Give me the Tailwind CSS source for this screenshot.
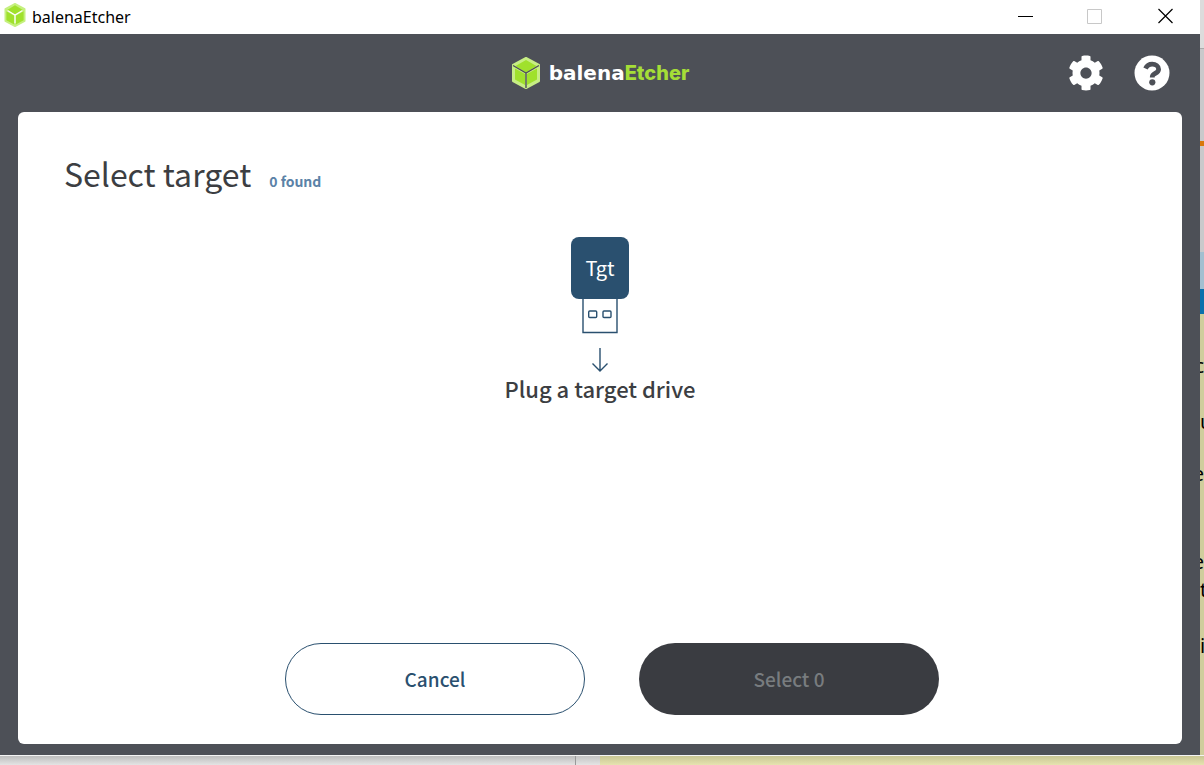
<!DOCTYPE html>
<html lang="en">
<head>
  <meta charset="UTF-8">
  <title>balenaEtcher</title>
  <meta name="viewport" content="width=device-width, initial-scale=1.0">
  <script src="https://cdn.jsdelivr.net/npm/@tailwindcss/browser@4"></script>
</head>
<body class="h-screen flex flex-col overflow-hidden bg-white font-['Noto_Sans_CJK_SC','Noto_Sans',sans-serif]">
  <div class="flex flex-1 min-h-0">

    <!-- App window -->
    <div class="flex flex-col flex-1 min-w-0 bg-[#4d5057]">
      <!-- Title bar -->
      <div class="flex items-center h-[34px] shrink-0 bg-white pl-1">
        <svg class="w-[22px] h-6 -mt-1" viewBox="0 0 28 32">
          <path d="M14 1 27 8v16l-13 7L1 24V8z" fill="#c5f07f" stroke="#c5f07f" stroke-width="2" stroke-linejoin="round"/>
          <path d="M14 3 25 9.500 14 16 3 9.500zM2.500 11 13 17v11.500L2.500 23zM25.500 11 15 17v11.500L25.500 23z" fill="#a0e12c"/>
          <path d="M4 10l10 6 10-6M14 16v11" fill="none" stroke="#fff" stroke-width="1.600"/>
        </svg>
        <span class="ml-[6px] text-[16px] leading-6 text-black font-['Noto_Sans',sans-serif]">balenaEtcher</span>
        <div class="flex ml-auto -mt-[3px]">
          <button class="w-[70px] h-[30px] flex items-center justify-center" aria-label="Minimize">
            <svg class="w-4 h-4" viewBox="0 0 16 16" fill="none" stroke="#000"><path d="M1 8.500h15"/></svg>
          </button>
          <button class="w-[70px] h-[30px] flex items-center justify-center" aria-label="Maximize" disabled>
            <svg class="w-4 h-4" viewBox="0 0 16 16" fill="none" stroke="#c8c8c8"><path d="M.5 1.500h14v14H.5z"/></svg>
          </button>
          <button class="w-[70px] h-[30px] flex items-center justify-center" aria-label="Close">
            <svg class="w-4 h-4" viewBox="0 0 16 16" fill="none" stroke="#000" stroke-width="1.200"><path d="M1.500 1l14 14M15.500 1l-14 14"/></svg>
          </button>
        </div>
      </div>

      <!-- Header -->
      <header class="grid grid-cols-3 items-center h-[78px] shrink-0 px-[30px]">
        <a href="#" class="col-start-2 flex items-center justify-center">
          <svg class="w-[30px] h-8" viewBox="0 0 30 32">
            <path d="M15 1 28 8v16l-13 7L2 24V8z" fill="#c7ee84" stroke="#c7ee84" stroke-width="2" stroke-linejoin="round"/>
            <path d="M15 3 25.500 9 15 15.500 4.500 9zM4 11.500 14 17v11L4 22.500zM26 11.500 16 17v11l10-5.500z" fill="#a0e12c"/>
            <path d="M2 8.500l13 7.500 13-7.500M15 16v15" fill="none" stroke="#4d5057" stroke-width="1.400"/>
          </svg>
          <span class="ml-2 text-[20px] leading-8 font-bold text-white font-['DejaVu_Sans',sans-serif]">balena<span class="font-extrabold text-[#a5de37] font-['Inter',sans-serif]">Etcher</span></span>
        </a>
        <div class="flex justify-end gap-[30px]">
          <button aria-label="Settings">
            <svg class="w-9 h-9" viewBox="0 0 512 512" fill="#fff"><path d="M487.400 315.700l-42.600-24.600c4.300-23.200 4.300-47 0-70.200l42.600-24.600c4.900-2.800 7.100-8.600 5.500-14-11.100-35.600-30-67.800-54.700-94.600-3.800-4.100-10-5.100-14.800-2.300L380.800 110c-17.900-15.400-38.500-27.300-60.800-35.100V25.800c0-5.600-3.900-10.500-9.400-11.700-36.700-8.200-74.300-7.800-109.200 0-5.500 1.200-9.400 6.100-9.400 11.700V75c-22.200 7.900-42.800 19.800-60.800 35.100L88.700 85.500c-4.900-2.800-11-1.900-14.800 2.300-24.700 26.700-43.600 58.900-54.700 94.600-1.700 5.400.6 11.200 5.500 14L67.300 221c-4.300 23.200-4.300 47 0 70.200l-42.600 24.600c-4.900 2.800-7.100 8.600-5.500 14 11.100 35.600 30 67.800 54.700 94.600 3.800 4.100 10 5.100 14.800 2.300l42.600-24.600c17.900 15.400 38.500 27.300 60.800 35.100v49.200c0 5.600 3.900 10.500 9.400 11.700 36.700 8.200 74.300 7.800 109.200 0 5.500-1.200 9.400-6.100 9.400-11.700v-49.200c22.200-7.900 42.800-19.800 60.800-35.100l42.600 24.600c4.900 2.800 11 1.900 14.800-2.300 24.700-26.700 43.600-58.900 54.700-94.600 1.500-5.500-.7-11.300-5.600-14.100zM256 336c-44.100 0-80-35.900-80-80s35.900-80 80-80 80 35.900 80 80-35.900 80-80 80z"/></svg>
          </button>
          <button aria-label="Help">
            <svg class="w-9 h-9" viewBox="0 0 36 36">
              <circle cx="18" cy="18" r="17.500" fill="#fff"/>
              <path d="M11.500 13.500c1.400-3 3.400-4.300 6.700-4.300 3.600 0 6.400 2 6.400 5 0 4.300-6.300 4-6.300 7.600v.7" fill="none" stroke="#4d5057" stroke-width="4.800"/>
              <circle cx="18.300" cy="27.300" r="3.100" fill="#4d5057"/>
            </svg>
          </button>
        </div>
      </header>

      <!-- Target selector -->
      <main class="flex flex-col flex-1 min-h-0 mx-[18px] mb-[11px] rounded-md bg-white">
        <div class="flex items-baseline pt-[37px] pl-[46px]">
          <h1 class="text-[32px] leading-[48px] text-[#3c3e42]">Select target</h1>
          <span class="ml-[18px] text-[14px] leading-6 font-bold text-[#5b82a7]">0 found</span>
        </div>

        <div class="flex flex-col items-center flex-1 pt-10">
          <div class="flex items-center justify-center w-[58px] h-[62px] rounded-lg bg-[#2a506f] text-[20px] leading-8 text-white">Tgt</div>
          <svg class="w-9 h-[73px]" viewBox="0 0 36 73" fill="none" stroke="#2a506f" stroke-width="1.400">
            <path d="M1 0v33.500h34V0"/>
            <rect x="6.700" y="12" width="8" height="6.500" rx="1"/>
            <rect x="21" y="12" width="8" height="6.500" rx="1"/>
            <path d="M18 49v22.500M10.500 64.500 18 72l7.500-7.500"/>
          </svg>
          <p class="text-[22px] leading-8 font-medium text-[#3c3e42]">Plug a target drive</p>
        </div>

        <div class="flex justify-center gap-[54px] pl-6 pb-[29px]">
          <button class="w-[300px] h-[72px] rounded-[36px] border border-[#2a506f] bg-white text-[19px] font-medium text-[#2a506f]">Cancel</button>
          <button class="w-[300px] h-[72px] rounded-[36px] bg-[#3a3c41] text-[19px] font-medium text-[#787c7f]" disabled>Select 0</button>
        </div>
      </main>
    </div>

    <!-- Sliver of the page behind, right edge -->
    <div class="flex flex-col w-1 shrink-0 overflow-hidden bg-[#cfcd9c] text-[20px] leading-6 text-black font-['Noto_Sans',sans-serif]">
      <div class="h-12 shrink-0 bg-[#dcdcdc]"></div>
      <div class="h-[93px] shrink-0 border-t border-[#aaa] bg-[#c9c9cb]"></div>
      <div class="h-[5px] shrink-0 bg-[#d9780c]"></div>
      <div class="h-[106px] shrink-0 bg-[#c9c9cb]"></div>
      <div class="h-[37px] shrink-0 bg-[#a3bfd0]"></div>
      <div class="h-[25px] shrink-0 bg-[#0b70ac]"></div>
      <div class="flex flex-col items-end pt-10">
        <span>c</span>
        <span class="self-start mt-8">u</span>
        <span class="mt-7">e</span>
        <span class="mt-16">e</span>
        <span class="self-start mt-1">t</span>
        <span class="self-start mt-8">i</span>
      </div>
    </div>
  </div>

  <!-- Bottom edge -->
  <div class="flex h-[10px] shrink-0 border-t border-[#f4f4f4]">
    <div class="w-[576px] border-r border-[#999] bg-linear-to-b from-[#bdbdbd] to-[#e4e4e4]"></div>
    <div class="w-6 bg-linear-to-b from-[#c4c4c4] to-[#e4e4e4]"></div>
    <div class="flex-1 bg-linear-to-b from-[#c9c694] to-[#e6e3b0]"></div>
  </div>
</body>
</html>
